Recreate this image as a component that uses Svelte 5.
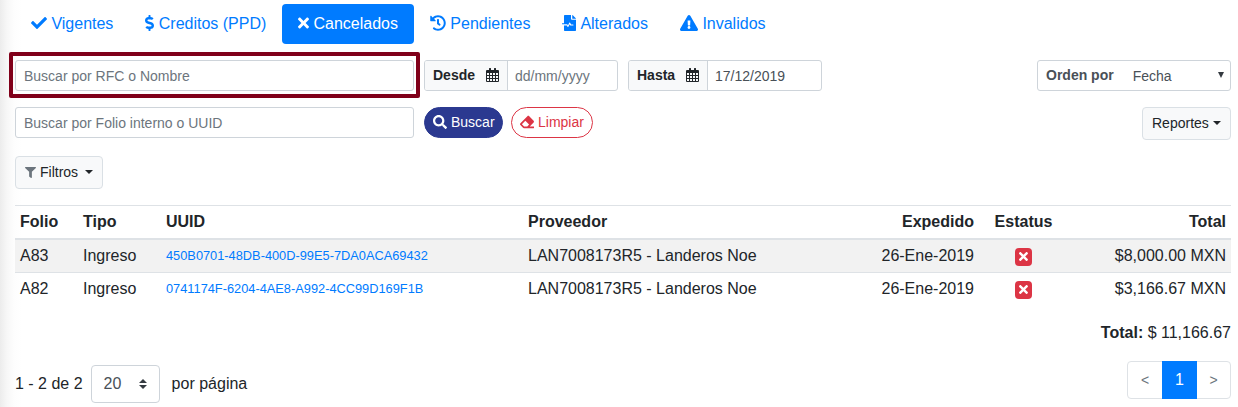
<script>
  const icons = {
    check: [512, 'M173.898 439.404l-166.4-166.4c-9.997-9.997-9.997-26.206 0-36.204l36.203-36.204c9.997-9.998 26.207-9.998 36.204 0L192 312.69 432.095 72.596c9.997-9.997 26.207-9.997 36.204 0l36.203 36.204c9.997 9.997 9.997 26.206 0 36.204l-294.4 294.401c-9.998 9.997-26.207 9.997-36.204-.001z'],
    dollar: [288, 'M209.2 233.4l-108-31.6C88.7 198.2 80 186.5 80 173.5c0-16.3 13.2-29.5 29.5-29.5h66.3c12.2 0 24.2 3.7 34.2 10.5 6.1 4.1 14.3 3.1 19.5-2l34.8-34c7.1-6.9 6.1-18.4-1.8-24.5C238 74.8 207.4 64.1 176 64V16c0-8.8-7.2-16-16-16h-32c-8.8 0-16 7.2-16 16v48h-2.5C45.8 64-5.4 118.7.5 183.6c4.2 46.1 39.4 83.6 83.8 96.6l102.5 30c12.5 3.7 21.2 15.3 21.2 28.3 0 16.3-13.2 29.5-29.5 29.5h-66.3C100 368 88 364.3 78 357.5c-6.1-4.1-14.3-3.1-19.5 2l-34.8 34c-7.1 6.9-6.1 18.4 1.8 24.5 24.5 19.2 55.1 29.9 86.5 30v48c0 8.8 7.2 16 16 16h32c8.8 0 16-7.2 16-16v-48.2c46.6-.9 90.3-28.6 105.7-72.7 21.5-61.6-14.6-124.8-72.5-141.7z'],
    times: [352, 'M242.72 256l100.07-100.07c12.28-12.28 12.28-32.19 0-44.48l-22.24-22.24c-12.28-12.28-32.19-12.28-44.48 0L176 189.28 75.93 89.21c-12.28-12.28-32.19-12.28-44.48 0L9.21 111.45c-12.28 12.28-12.28 32.19 0 44.48L109.28 256 9.21 356.07c-12.28 12.28-12.28 32.19 0 44.48l22.24 22.24c12.28 12.28 32.2 12.28 44.48 0L176 322.72l100.07 100.07c12.28 12.28 32.2 12.28 44.48 0l22.24-22.24c12.28-12.28 12.28-32.19 0-44.48L242.72 256z'],
    history: [512, 'M504 255.531c.253 136.64-111.18 248.372-247.82 248.468-59.015.042-113.223-20.53-155.822-54.911-11.077-8.94-11.905-25.541-1.839-35.607l11.267-11.267c8.609-8.609 22.353-9.551 31.891-1.984C173.062 425.135 212.781 440 256 440c101.705 0 184-82.311 184-184 0-101.705-82.311-184-184-184-48.814 0-93.149 18.969-126.068 49.932l50.754 50.754c10.08 10.08 2.941 27.314-11.313 27.314H24c-8.837 0-16-7.163-16-16V38.627c0-14.254 17.234-21.393 27.314-11.314l49.372 49.372C129.209 34.136 189.552 8 256 8c136.81 0 247.747 110.78 248 247.531zm-180.912 78.784l9.823-12.63c8.138-10.463 6.253-25.542-4.21-33.679L288 256.349V152c0-13.255-10.745-24-24-24h-16c-13.255 0-24 10.745-24 24v135.651l65.409 50.874c10.463 8.137 25.541 6.253 33.679-4.21z'],
    file: [448, 'M288 0v128c0 13 11 24 24 24h136v336q0 24-24 24H88q-24 0-24-24V336h88l24 42q14 18 28 0l42-82 14 28q5 12 16 12h76q16 0 16-16t-16-16h-62l-30-58q-14-20-28 0l-42 86-16-28q-5-8-14-8H8q-8 0-8-8v-16q0-8 8-8h56V24Q64 0 88 0zM328 0q12 0 20 8l92 92q8 8 8 20H328z'],
    warning: [576, 'M569.517 440.013C587.975 472.007 564.806 512 527.94 512H48.054c-36.937 0-59.999-40.055-41.577-71.987L246.423 23.985c18.467-32.009 64.72-31.951 83.154 0l239.94 416.028zM288 354c-25.405 0-46 20.595-46 46s20.595 46 46 46 46-20.595 46-46-20.595-46-46-46zm-43.673-165.346l7.418 136c.347 6.364 5.609 11.346 11.982 11.346h48.546c6.373 0 11.635-4.982 11.982-11.346l7.418-136c.375-6.874-5.098-12.654-11.982-12.654h-63.383c-6.884 0-12.356 5.78-11.981 12.654z'],
    search: [512, 'M505 442.7L405.3 343c-4.5-4.5-10.6-7-17-7H372c27.6-35.3 44-79.7 44-128C416 93.1 322.9 0 208 0S0 93.1 0 208s93.1 208 208 208c48.3 0 92.7-16.4 128-44v16.3c0 6.4 2.5 12.5 7 17l99.7 99.7c9.4 9.4 24.6 9.4 33.9 0l28.3-28.3c9.4-9.4 9.4-24.6.1-34zM208 336c-70.7 0-128-57.2-128-128 0-70.7 57.2-128 128-128 70.7 0 128 57.2 128 128 0 70.7-57.2 128-128 128z'],
    eraser: [512, 'M497.941 273.941c18.745-18.745 18.745-49.137 0-67.882l-160-160c-18.745-18.745-49.136-18.746-67.883 0l-256 256c-18.745 18.745-18.745 49.137 0 67.882l96 96A48.004 48.004 0 0 0 144 480h356c6.627 0 12-5.373 12-12v-40c0-6.627-5.373-12-12-12H355.883l142.058-142.059zm-302.627-62.627l137.373 137.373L265.373 416H150.628l-80-80 124.686-124.686z'],
    filter: [512, 'M487.976 0H24.028C2.71 0-8.047 25.866 7.058 40.971L192 225.941V432c0 7.831 3.821 15.17 10.237 19.662l80 55.98C298.02 518.69 320 507.493 320 487.98V225.941l184.947-184.97C520.021 25.896 509.338 0 487.976 0z']
  };
  const tabs = [
    ['check', 'Vigentes'],
    ['dollar', 'Creditos (PPD)'],
    ['times', 'Cancelados'],
    ['history', 'Pendientes'],
    ['file', 'Alterados'],
    ['warning', 'Invalidos']
  ];
  const rows = [
    { folio: 'A83', uuid: '450B0701-48DB-400D-99E5-7DA0ACA69432', total: '$8,000.00 MXN' },
    { folio: 'A82', uuid: '0741174F-6204-4AE8-A992-4CC99D169F1B', total: '$3,166.67 MXN' }
  ];
</script>

{#snippet icon(name, size)}
  <svg class="icon" viewBox="0 0 {icons[name][0]} 512" width={(icons[name][0] / 512) * size} height={size}><path fill="currentColor" d={icons[name][1]} /></svg>
{/snippet}

{#snippet calendar()}
  <svg class="cal" width="13" height="14" viewBox="0 0 13 14"><path fill="currentColor" fill-rule="evenodd" d="M1 2h2V.5q0-.5.5-.5h1q.5 0 .5.5V2h3V.5q0-.5.5-.5h1q.5 0 .5.5V2h2q1 0 1 1v10q0 1-1 1H1q-1 0-1-1V3q0-1 1-1zM1 5v2h2V5zm3 0v2h2V5zm3 0v2h2V5zm3 0v2h2V5zM1 8v2h2V8zm3 0v2h2V8zm3 0v2h2V8zm3 0v2h2V8zM1 11v2h2v-2zm3 0v2h2v-2zm3 0v2h2v-2zm3 0v2h2v-2z" /></svg>
{/snippet}

<main>
  <nav>
    {#each tabs as [glyph, label]}
      <a class="tab {glyph}" class:active={glyph === 'times'}>{@render icon(glyph, 16)}<span>{label}</span></a>
    {/each}
  </nav>

  <section class="filters">
    <div class="field highlighted">Buscar por RFC o Nombre</div>
    <div class="date from"><b>Desde {@render calendar()}</b><span class="muted">dd/mm/yyyy</span></div>
    <div class="date to"><b>Hasta {@render calendar()}</b><span>17/12/2019</span></div>
    <div class="order"><b>Orden por</b><span>Fecha</span><svg width="6" height="6" viewBox="0 0 6 6"><path d="M0 0h6L3 6z" fill="#343a40" /></svg></div>
  </section>

  <section class="actions">
    <div class="field">Buscar por Folio interno o UUID</div>
    <button class="pill search">{@render icon('search', 14)}<span>Buscar</span></button>
    <button class="pill clear">{@render icon('eraser', 14)}<span>Limpiar</span></button>
    <button class="light reports">Reportes<i class="caret"></i></button>
  </section>

  <button class="light filter-menu">{@render icon('filter', 11)}<span>Filtros</span><i class="caret"></i></button>

  <table>
    <colgroup><col style:width="63px" /><col style:width="83px" /><col style:width="362px" /><col style:width="300px" /><col style:width="156px" /><col style:width="89px" /><col /></colgroup>
    <thead>
      <tr><th>Folio</th><th>Tipo</th><th>UUID</th><th>Proveedor</th><th class="right">Expedido</th><th class="center">Estatus</th><th class="right">Total</th></tr>
    </thead>
    <tbody>
      {#each rows as row}
        <tr>
          <td>{row.folio}</td><td>Ingreso</td><td class="uuid">{row.uuid}</td><td>LAN7008173R5 - Landeros Noe</td>
          <td class="right">26-Ene-2019</td><td class="center"><span class="badge">{@render icon('times', 13)}</span></td><td class="right">{row.total}</td>
        </tr>
      {/each}
    </tbody>
  </table>

  <div class="sum"><b>Total:</b> $ 11,166.67</div>

  <footer>
    <span>1 - 2 de 2</span>
    <div class="size">20<svg width="8" height="10" viewBox="0 0 8 10"><path d="M4 0l4 4H0zM0 6h8l-4 4z" fill="#343a40" /></svg></div>
    <span>por página</span>
    <div class="pages"><span>&lt;</span><span class="current">1</span><span>&gt;</span></div>
  </footer>
</main>

<style>
  :global(body) { margin: 0; background: #fff; }
  * { box-sizing: border-box; }
  main { height: 407px; padding: 4px 7px 0 15px; overflow: hidden; font: 16px/24px "Liberation Sans", Arial, sans-serif; color: #212529; background: linear-gradient(90deg, #ececec 0, #f7f7f7 7px, #fdfdfd 14px, #fff 22px); }
  nav { display: flex; height: 40px; }
  .tab { display: flex; align-items: center; height: 40px; padding: 0 16px; border-radius: 4px; color: #007bff; white-space: nowrap; }
  .tab span { margin-left: 4.4px; }
  .tab .icon { position: relative; top: -1px; }
  .tab.file span { margin-left: 4px; }
  .tab.times { margin-left: -0.3px; }
  .active { color: #fff; background: #007bff; }
  .icon, .cal { flex: none; display: block; }
  .filters, .actions { display: flex; align-items: flex-start; font-size: 14px; line-height: 21px; }
  .filters { margin-top: 16px; height: 31px; }
  .actions { margin-top: 16px; height: 33px; }
  .field { width: 399px; height: 31px; padding: 5px 8px; border: 1px solid #ced4da; border-radius: 3px; background: #fff; color: #6c757d; }
  .highlighted { position: relative; }
  .highlighted::after { content: ""; position: absolute; inset: -9px -7px -8px -7px; border: 4px solid #80001a; border-radius: 2px; }
  .date { display: flex; width: 194px; height: 31px; margin-left: 10px; border: 1px solid #ced4da; border-radius: 3px; color: #495057; overflow: hidden; }
  .date b { display: flex; justify-content: space-between; width: 83px; padding: 4px 8px; border-right: 1px solid #ced4da; background: #f8f9fa; color: #212529; }
  .date.to b { width: 79px; }
  .date .cal { margin-top: 3px; }
  .date > span { padding: 5px 7px; }
  .date .muted { color: #6c757d; }
  .order { display: flex; align-items: center; width: 194px; height: 31px; margin-left: auto; padding: 0 6px 0 8px; border: 1px solid #ced4da; border-radius: 3px; color: #495057; }
  .order span { margin: 2px auto 0 19px; }
  .order svg { margin-bottom: 2px; }
  button { display: flex; align-items: center; font: 14px/21px "Liberation Sans", Arial, sans-serif; padding: 0 8px; }
  .pill { height: 31px; border-radius: 16px; margin-left: 10px; }
  .pill span { margin-left: 4px; }
  .pill .icon { margin-bottom: 1px; }
  .search { width: 79px; color: #fff; background: #2b3990; border: 1px solid #2b3990; }
  .clear { width: 82px; margin-left: 8px; color: #dc3545; background: #fff; border: 1px solid #dc3545; }
  .light { height: 33px; color: #212529; background: #f8f9fa; border: 1px solid #dae0e5; border-radius: 4px; }
  .reports { width: 89px; margin-left: auto; padding: 0 9px; }
  .caret { border: 4px solid transparent; border-top-color: currentColor; border-bottom: 0; margin: 0 0 2px 4px; }
  .filter-menu { width: 88px; margin-top: 16px; padding: 0 9px; }
  .filter-menu .icon { color: #6c757d; }
  .filter-menu span { margin-left: 4px; }
  .filter-menu .caret { margin-left: 7px; }
  table { width: 1216px; margin-top: 16px; table-layout: fixed; border-collapse: separate; border-spacing: 0; }
  th, td { padding: 0 5px; height: 33px; text-align: left; white-space: nowrap; line-height: 24px; border-top: 1px solid #dee2e6; }
  th { height: 35px; border-bottom: 2px solid #dee2e6; }
  tbody tr:first-child td { background: #f2f2f2; border-top: 0; height: 32px; }
  .uuid { color: #007bff; font-size: 12.8px; }
  th.right, td.right { text-align: right; }
  th.center, td.center { text-align: center; }
  .badge { display: flex; align-items: center; justify-content: center; width: 17px; height: 18px; margin: 1px auto 0; border-radius: 4px; color: #fff; background: #dc3545; }
  .sum { margin-top: 16px; text-align: right; }
  footer { display: flex; align-items: center; height: 38px; margin-top: 20px; }
  .size { display: flex; align-items: center; justify-content: space-between; width: 69px; height: 38px; margin: 0 12px 0 8px; padding: 0 12px; border: 1px solid #ced4da; border-radius: 4px; color: #495057; background: #fff; }
  .pages { display: flex; align-self: flex-start; margin: -4px 0 0 auto; border: 1px solid #dee2e6; border-radius: 4px; height: 38px; color: #6c757d; }
  .pages span { width: 34px; line-height: 36px; text-align: center; }
  .pages span:first-child { font-size: 14px; }
  .pages span:last-child { width: 33px; font-size: 14px; }
  .pages .current { width: 35px; height: 38px; margin-top: -1px; line-height: 38px; color: #fff; background: #007bff; }
</style>
